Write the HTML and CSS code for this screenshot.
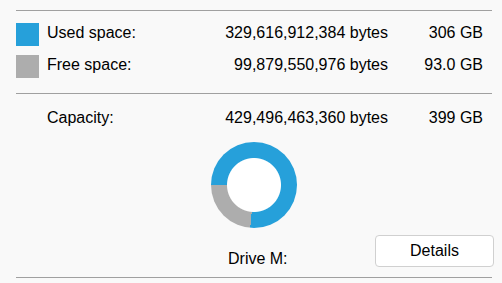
FILE: index.html
```html
<!DOCTYPE html>
<html lang="en">
<head>
    <meta charset="UTF-8">
    <meta name="viewport" content="width=device-width, initial-scale=1.0">
    <title>Drive M: Properties</title>
    <link rel="stylesheet" href="styles.css">
</head>
<body>
    <div class="panel">
        <div class="rule"></div>

        <!-- Used / free space -->
        <div class="usage">
            <div class="row">
                <span class="swatch used"></span>
                <span class="label">Used space:</span>
                <span class="bytes">329,616,912,384 bytes</span>
                <span class="size">306 GB</span>
            </div>
            <div class="row">
                <span class="swatch free"></span>
                <span class="label">Free space:</span>
                <span class="bytes">99,879,550,976 bytes</span>
                <span class="size">93.0 GB</span>
            </div>
        </div>

        <div class="rule"></div>

        <div class="row capacity">
            <span></span>
            <span class="label">Capacity:</span>
            <span class="bytes">429,496,463,360 bytes</span>
            <span class="size">399 GB</span>
        </div>

        <div class="donut"></div>

        <div class="footer">
            <span class="drive">Drive M:</span>
            <button class="details">Details</button>
        </div>

        <div class="rule"></div>
    </div>
</body>
</html>
```

FILE: styles.css
```css
body {
    margin: 0;
    padding: 0;
    background-color: #f9f9f9;
    font-family: "Liberation Sans", Arial, sans-serif;
    font-size: 16px;
    color: #000;
}

.panel {
    width: 476px;
    padding: 10px 10px 0 16px;
}

.rule {
    height: 1px;
    background-color: #a0a0a0;
}

.usage {
    display: flex;
    flex-direction: column;
    gap: 9px;
    padding: 12px 0 15px 0;
}

.row {
    display: grid;
    grid-template-columns: 23px 1fr auto 95px;
    align-items: start;
    line-height: 20px;
    padding-right: 9px;
    height: 23px;
}

.swatch {
    width: 23px;
    height: 23px;
}

.swatch.used {
    background-color: #26a0da;
}

.swatch.free {
    background-color: #adadad;
}

.label {
    margin-left: 8px;
}

.bytes,
.size {
    text-align: right;
}

.capacity {
    margin-top: 14px;
    height: 20px;
}

.donut {
    width: 86px;
    height: 86px;
    margin: 14px 0 0 195px;
    border-radius: 50%;
    background:
        radial-gradient(circle, #fff 0 26.5px, transparent 27.5px),
        conic-gradient(#26a0da 0deg 185deg, #adadad 185deg 270deg, #26a0da 270deg 360deg);
}

.footer {
    display: flex;
    align-items: flex-end;
    margin: 7px -2px 10px 0;
}

.drive {
    margin-left: 212px;
    margin-bottom: -2px;
    line-height: 20px;
}

.details {
    margin-left: auto;
    width: 119px;
    height: 32px;
    background-color: #fff;
    border: 1px solid #d0d0d0;
    border-radius: 4px;
    font-family: "Liberation Sans", Arial, sans-serif;
    font-size: 16px;
    color: #000;
    padding: 0;
}
```
